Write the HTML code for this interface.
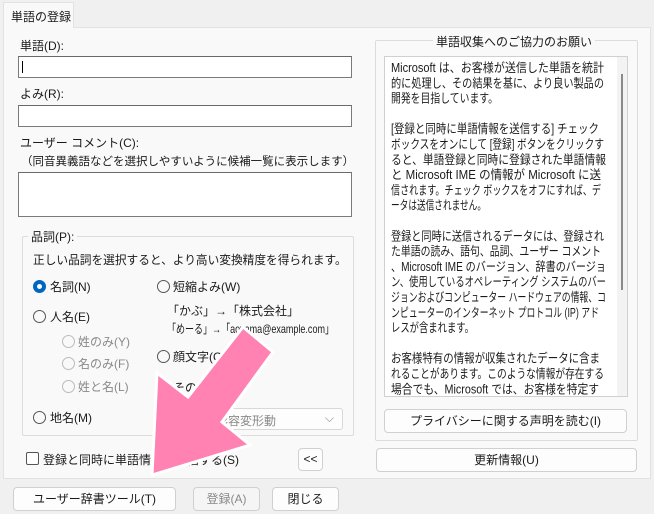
<!DOCTYPE html><html><head><meta charset="utf-8"><style>
*{box-sizing:border-box;margin:0;padding:0}
body{width:654px;height:514px;background:#f0f0f0;position:relative;overflow:hidden;font-family:"Liberation Sans","Noto Sans CJK JP",sans-serif;font-size:12px;color:#1a1a1a}
.a{position:absolute;white-space:nowrap}
.inp{position:absolute;background:#fff;border:1px solid #7a7a7a;border-top-color:#6a6a6a}
.btn{position:absolute;background:#fdfdfd;border:1px solid #d0d0d0;border-radius:4px;text-align:center;font-size:12px;line-height:20px}
.grp{position:absolute;border:1px solid #dcdcdc;border-radius:2px}
.rad{position:absolute;width:13px;height:13px;border:1px solid #555;border-radius:50%;background:#f9f9f9}
.rd{border-color:#bbb}
.gr{color:#8a8a8a}
svg text{font-family:"Liberation Sans","Noto Sans CJK JP",sans-serif;font-size:12.5px;fill:#1a1a1a}
</style></head><body>
<div class="a" style="left:3px;top:27px;width:648px;height:452px;background:#f9f9f9;border:1px solid #e2e2e2"></div>
<div class="a" style="left:3px;top:2px;width:71px;height:26px;background:#f9f9f9;border:1px solid #e2e2e2;border-bottom:none;padding:5px 0 0 7px;font-size:12px">単語の登録</div>
<div class="a" style="left:20px;top:37px">単語(D):</div>
<div class="inp" style="left:18px;top:56px;width:334px;height:22px"><div class="a" style="left:3px;top:4px;width:1px;height:12px;background:#000"></div></div>
<div class="a" style="left:20px;top:85px">よみ(R):</div>
<div class="inp" style="left:18px;top:105px;width:334px;height:22px"></div>
<div class="a" style="left:20px;top:134px">ユーザー コメント(C):</div>
<div class="a" style="left:21px;top:153px;font-size:11.5px">（同音異義語などを選択しやすいように候補一覧に表示します）</div>
<div class="inp" style="left:18px;top:172px;width:334px;height:45px"></div>
<div class="grp" style="left:22px;top:236px;width:332px;height:200px"></div>
<div class="a" style="left:28px;top:228px;background:#f9f9f9;padding:0 3px">品詞(P):</div>
<div class="a" style="left:33px;top:251px;font-size:11.7px">正しい品詞を選択すると、より高い変換精度を得られます。</div>
<div class="rad" style="left:33px;top:280px;border:4px solid #0067c0;background:#fff"></div><div class="a" style="left:50px;top:278px">名詞(N)</div>
<div class="rad" style="left:157px;top:280px"></div><div class="a" style="left:173px;top:278px">短縮よみ(W)</div>
<div class="a" style="left:167px;top:302px">「かぶ」→「株式会社」</div>
<svg class="a" style="left:0;top:0" width="654" height="514"><text x="167" y="333" textLength="167" lengthAdjust="spacingAndGlyphs" style="font-size:12px">「めーる」→「aoyama@example.com」</text></svg>
<div class="rad" style="left:33px;top:310px"></div><div class="a" style="left:50px;top:308px">人名(E)</div>
<div class="rad rd" style="left:62px;top:335px"></div><div class="a gr" style="left:78px;top:333px">姓のみ(Y)</div>
<div class="rad rd" style="left:62px;top:357px"></div><div class="a gr" style="left:78px;top:355px">名のみ(F)</div>
<div class="rad rd" style="left:62px;top:380px"></div><div class="a gr" style="left:78px;top:378px">姓と名(L)</div>
<div class="rad" style="left:157px;top:350px"></div><div class="a" style="left:173px;top:348px">顔文字(O)</div>
<div class="a" style="left:173px;top:379px">その他</div>
<div class="rad" style="left:33px;top:411px"></div><div class="a" style="left:50px;top:409px">地名(M)</div>
<div class="a" style="left:170px;top:408px;width:173px;height:22px;background:#fdfdfd;border:1px solid #d8d8d8;border-radius:3px;padding:3px 0 0 45px" ><span class="gr">形容変形動</span><span class="a gr" style="right:8px;top:2px">⌵</span></div>
<div class="a" style="left:26px;top:452px;width:13px;height:13px;border:1px solid #555;border-radius:2px;background:#fff"></div>
<div class="a" style="left:43px;top:451px">登録と同時に単語情報を送信する(S)</div>
<div class="btn" style="left:298px;top:448px;width:25px;height:23px">&lt;&lt;</div>
<div class="grp" style="left:375px;top:40px;width:263px;height:401px"></div>
<div class="a" style="left:433px;top:33px;background:#f9f9f9;padding:0 3px">単語収集へのご協力のお願い</div>
<div class="a" style="left:384px;top:56px;width:244px;height:341px;background:#fff;border:1px solid #d0d0d0;overflow:hidden">
<div class="a" style="right:0;top:0;width:10px;height:340px;background:#f3f3f3"><div class="a" style="left:4px;top:17px;width:2px;height:216px;background:#8a8a8a"></div></div>
<svg class="a" style="left:-384px;top:-56px" width="654" height="420">
<text x="390" y="71" textLength="213" lengthAdjust="spacingAndGlyphs">Microsoft は、お客様が送信した単語を統計</text>
<text x="390" y="86.3" textLength="213" lengthAdjust="spacingAndGlyphs">的に処理し、その結果を基に、より良い製品の</text>
<text x="390" y="101.6" textLength="107" lengthAdjust="spacingAndGlyphs">開発を目指しています。</text>
<text x="390" y="132.2" textLength="208" lengthAdjust="spacingAndGlyphs">[登録と同時に単語情報を送信する] チェック</text>
<text x="390" y="147.5" textLength="213" lengthAdjust="spacingAndGlyphs">ボックスをオンにして [登録] ボタンをクリックす</text>
<text x="390" y="162.8" textLength="215" lengthAdjust="spacingAndGlyphs">ると、単語登録と同時に登録された単語情報</text>
<text x="390" y="178.1" textLength="210" lengthAdjust="spacingAndGlyphs">と Microsoft IME の情報が Microsoft に送</text>
<text x="390" y="193.4" textLength="210" lengthAdjust="spacingAndGlyphs">信されます。チェック ボックスをオフにすれば、デ</text>
<text x="390" y="208.7" textLength="95" lengthAdjust="spacingAndGlyphs">ータは送信されません。</text>
<text x="390" y="239.3" textLength="213" lengthAdjust="spacingAndGlyphs">登録と同時に送信されるデータには、登録され</text>
<text x="390" y="254.6" textLength="210" lengthAdjust="spacingAndGlyphs">た単語の読み、語句、品詞、ユーザー コメント</text>
<text x="390" y="269.9" textLength="215" lengthAdjust="spacingAndGlyphs">、Microsoft IME のバージョン、辞書のバージョ</text>
<text x="390" y="285.2" textLength="215" lengthAdjust="spacingAndGlyphs">ン、使用しているオペレーティング システムのバー</text>
<text x="390" y="300.5" textLength="215" lengthAdjust="spacingAndGlyphs">ジョンおよびコンピューター ハードウェアの情報、コ</text>
<text x="390" y="315.8" textLength="208" lengthAdjust="spacingAndGlyphs">ンピューターのインターネット プロトコル (IP) アド</text>
<text x="390" y="331.1" textLength="83" lengthAdjust="spacingAndGlyphs">レスが含まれます。</text>
<text x="390" y="361.7" textLength="209" lengthAdjust="spacingAndGlyphs">お客様特有の情報が収集されたデータに含ま</text>
<text x="390" y="377" textLength="213" lengthAdjust="spacingAndGlyphs">れることがあります。このような情報が存在する</text>
<text x="390" y="392.3" textLength="208" lengthAdjust="spacingAndGlyphs">場合でも、Microsoft では、お客様を特定す</text>
<text x="390" y="407.6" textLength="205" lengthAdjust="spacingAndGlyphs">るために使用することはありません。</text>
</svg></div>
<div class="btn" style="left:384px;top:409px;width:243px;height:24px;line-height:22px">プライバシーに関する声明を読む(I)</div>
<div class="btn" style="left:376px;top:448px;width:261px;height:24px;line-height:22px">更新情報(U)</div>
<div class="btn" style="left:13px;top:487px;width:163px;height:24px;line-height:22px">ユーザー辞書ツール(T)</div>
<div class="btn gr" style="left:193px;top:487px;width:67px;height:24px;line-height:22px;background:#f5f5f5">登録(A)</div>
<div class="btn" style="left:272px;top:487px;width:67px;height:24px;line-height:22px">閉じる</div>
<svg class="a" style="left:0;top:0" width="654" height="514"><polygon points="243,327 273,352 222,422 250,445 152,475 157,373 188,397" fill="#ff82b2" stroke="#fff" stroke-width="3" stroke-linejoin="miter"/></svg>
</body></html>
